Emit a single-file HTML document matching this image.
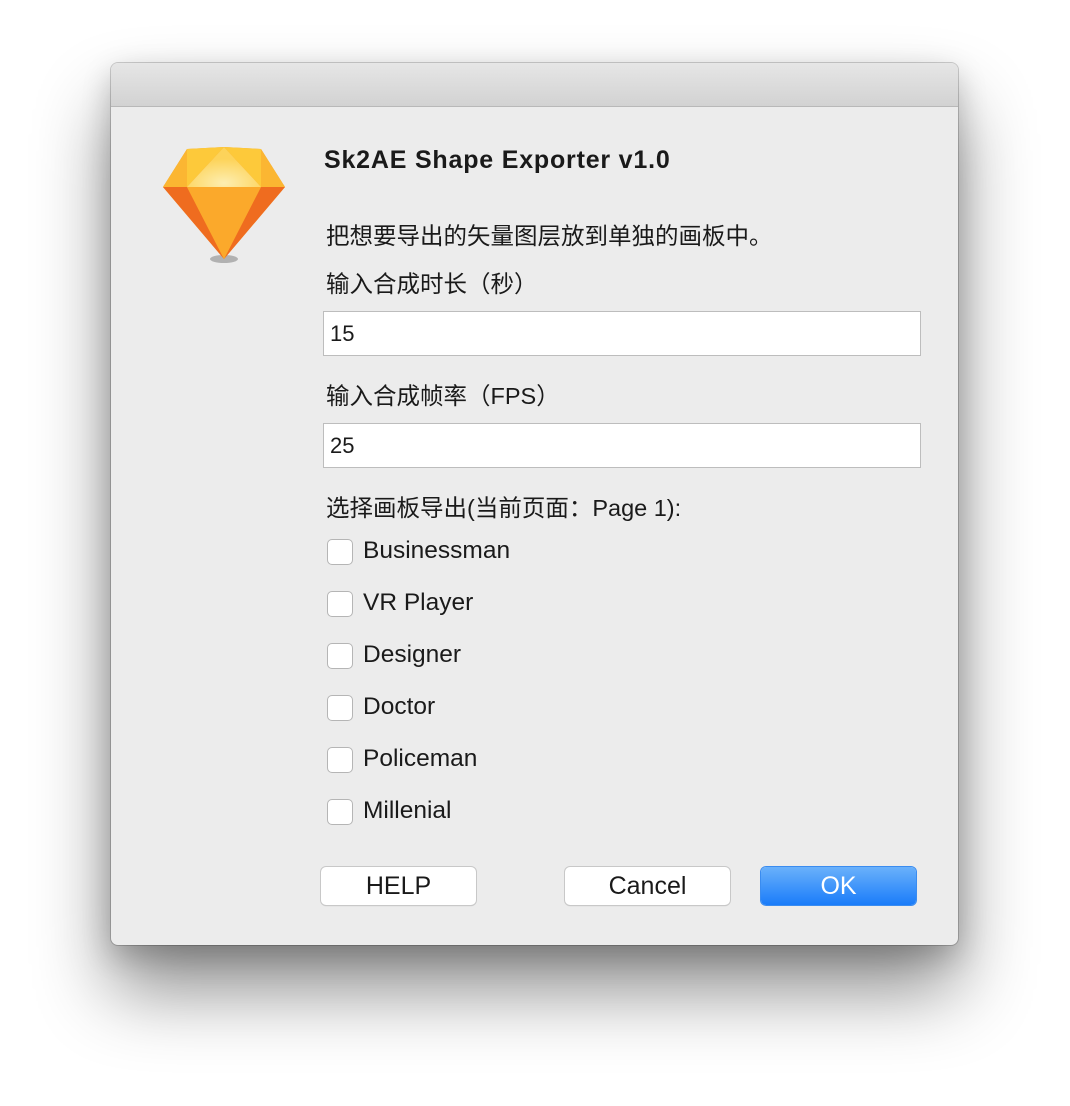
<!DOCTYPE html>
<html><head><meta charset="utf-8"><style>
html,body{margin:0;padding:0;background:#fff;width:1070px;height:1106px;overflow:hidden;font-family:"Liberation Sans","Noto Sans CJK SC",sans-serif;color:#1a1a1a}
.win{position:absolute;left:111px;top:63px;width:847px;height:882px;background:#ececec;border-radius:7px;box-shadow:0 0 0 1px rgba(0,0,0,0.18),0 45px 75px rgba(0,0,0,0.45),0 10px 30px rgba(0,0,0,0.2);overflow:hidden}
.tb{height:43px;background:linear-gradient(#e6e6e6,#d2d2d2);border-bottom:1px solid #b8b8b8}
.a{position:absolute;white-space:nowrap}
.lbl{font-size:23.5px;left:215px}
.inp{position:absolute;left:212px;width:590px;height:43px;background:#fff;border:1px solid #bdbdbd;font-size:22px;line-height:43px;padding-left:6px;box-sizing:content-box}
.cb{position:absolute;left:216px;width:24px;height:24px;background:#fff;border:1px solid #b5b5b5;border-radius:5px}
.ct{position:absolute;left:252px;font-size:24.5px;white-space:nowrap}
.btn{position:absolute;top:804px;height:38px;background:#fff;border-radius:5px;box-shadow:0 0 0 1px #c8c8c8,0 1px 1px rgba(0,0,0,0.2);text-align:center;line-height:38px;font-size:25px}
</style></head><body>
<div class="win">
<div class="tb"></div>
<svg class="a" style="left:50px;top:84px" width="126" height="118" viewBox="0 0 126 118">
<defs><radialGradient id="g1" cx="0.5" cy="0.9" r="0.6"><stop offset="0" stop-color="#fdeeb0"/><stop offset="1" stop-color="#fdd35a"/></radialGradient></defs>
<ellipse cx="63" cy="112" rx="14" ry="4" fill="rgba(0,0,0,0.25)"/>
<polygon points="26,2 63,0 100,2 124,40 63,112 2,40" fill="#f79a22"/>
<polygon points="2,40 26,2 26,40" fill="#fbb632"/>
<polygon points="124,40 100,2 100,40" fill="#fbb632"/>
<polygon points="26,2 63,0 26,40" fill="#fdc93a"/>
<polygon points="100,2 63,0 100,40" fill="#fdc93a"/>
<polygon points="63,0 26,40 100,40" fill="url(#g1)"/>
<polygon points="2,40 26,40 63,112" fill="#ef6c1f"/>
<polygon points="124,40 100,40 63,112" fill="#ef6c1f"/>
<polygon points="26,40 100,40 63,112" fill="#fba92b"/>
</svg>
<div class="a" style="left:213px;top:83px;font-size:25px;letter-spacing:0.8px;font-weight:bold">Sk2AE Shape Exporter v1.0</div>
<div class="a lbl" style="top:154px">把想要导出的矢量图层放到单独的画板中。</div>
<div class="a lbl" style="top:202px">输入合成时长（秒）</div>
<div class="inp" style="top:248px">15</div>
<div class="a lbl" style="top:314px">输入合成帧率（FPS）</div>
<div class="inp" style="top:360px">25</div>
<div class="a lbl" style="top:426px">选择画板导出(当前页面：Page 1):</div>
<div class="cb" style="top:476px"></div><div class="ct" style="top:474px">Businessman</div>
<div class="cb" style="top:528px"></div><div class="ct" style="top:526px">VR Player</div>
<div class="cb" style="top:580px"></div><div class="ct" style="top:578px">Designer</div>
<div class="cb" style="top:632px"></div><div class="ct" style="top:630px">Doctor</div>
<div class="cb" style="top:684px"></div><div class="ct" style="top:682px">Policeman</div>
<div class="cb" style="top:736px"></div><div class="ct" style="top:734px">Millenial</div>
<div class="btn" style="left:210px;width:155px">HELP</div>
<div class="btn" style="left:454px;width:165px">Cancel</div>
<div class="btn" style="left:650px;width:155px;background:linear-gradient(#6ab1fb,#1a7cf9);color:#fff;box-shadow:0 0 0 1px #3a8cf0">OK</div>
</div>
</body></html>
